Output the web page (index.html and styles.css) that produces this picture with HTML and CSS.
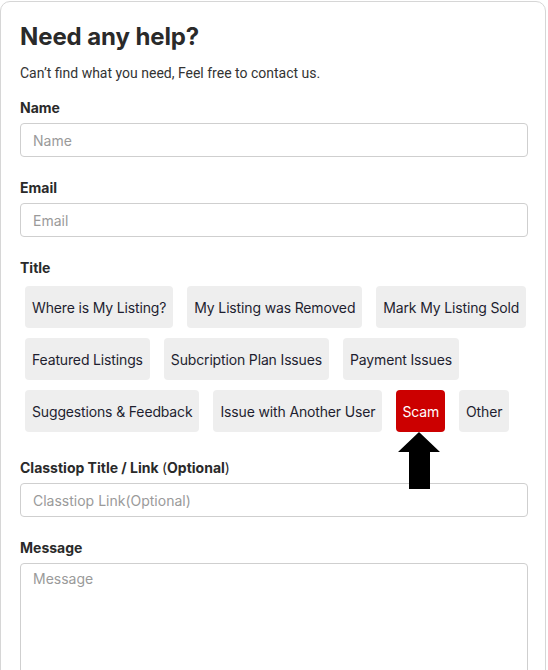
FILE: index.html
```html
<!DOCTYPE html>
<html>
<head>
<meta charset="utf-8">
<link rel="stylesheet" href="styles.css">
</head>
<body>
<div class="card">
  <h1 class="title">Need any help?</h1>
  <p class="sub">Can’t find what you need, Feel free to contact us.</p>

  <div class="field field-first">
    <label class="label">Name</label>
    <div class="input">Name</div>
  </div>

  <div class="field">
    <label class="label">Email</label>
    <div class="input">Email</div>
  </div>

  <div class="field field-chips">
    <label class="label">Title</label>
    <div class="chips">
      <span class="chip">Where is My Listing?</span>
      <span class="chip">My Listing was Removed</span>
      <span class="chip">Mark My Listing Sold</span>
      <span class="chip">Featured Listings</span>
      <span class="chip">Subcription Plan Issues</span>
      <span class="chip">Payment Issues</span>
      <span class="chip">Suggestions &amp; Feedback</span>
      <span class="chip">Issue with Another User</span>
      <span class="chip chip-active">Scam
        <svg class="arrow" width="42" height="57" viewBox="0 0 42 57"><polygon points="21,0 42,20 32,20 32,57 11,57 11,20 0,20" fill="#000"/></svg>
      </span>
      <span class="chip">Other</span>
    </div>
  </div>

  <div class="field field-after-chips">
    <label class="label">Classtiop Title / Link <span class="paren">(</span>Optional<span class="paren">)</span></label>
    <div class="input">Classtiop Link<span class="paren">(</span>Optional<span class="paren">)</span></div>
  </div>

  <div class="field">
    <label class="label">Message</label>
    <div class="input textarea">Message</div>
  </div>
</div>
</body>
</html>
```

FILE: styles.css
```css
html, body {
  margin: 0;
  padding: 0;
  background: #fff;
  overflow: hidden;
}
body {
  padding-top: 1px;
}
.card {
  width: 546px;
  height: 700px;
  box-sizing: border-box;
  border: 1px solid #d6d6d6;
  border-radius: 10px;
  padding: 19px 17px 0 19px;
  font-family: "Inter", "Liberation Sans", sans-serif;
  color: #2b2b2b;
}
.title {
  font-family: "Inter", sans-serif;
  font-weight: 700;
  font-size: 24px;
  line-height: 32px;
  margin: 0;
  color: #2a2a2a;
  letter-spacing: -0.1px;
}
.sub {
  font-family: "Roboto", sans-serif;
  font-size: 14px;
  line-height: 20px;
  margin: 10px 0 0;
  color: #333;
}
.field {
  display: flex;
  flex-direction: column;
  margin-top: 21px;
}
.field-first {
  margin-top: 15px;
}
.field-after-chips {
  margin-top: 26px;
}
.label {
  font-family: "Inter", sans-serif;
  font-weight: 700;
  font-size: 14px;
  line-height: 20px;
  color: #2a2a2a;
  margin-bottom: 5px;
}
.paren {
  font-weight: 400;
}
.input {
  box-sizing: border-box;
  height: 34px;
  border: 1px solid #cfcfcf;
  border-radius: 4px;
  padding: 0 12px;
  display: flex;
  align-items: center;
  font-family: "Inter", sans-serif;
  font-size: 14px;
  color: #9a9a9a;
}
.textarea {
  height: 140px;
  align-items: flex-start;
  padding-top: 6px;
}
.field-chips .label {
  margin-bottom: 8px;
}
.chips {
  display: flex;
  flex-wrap: wrap;
  gap: 10px 14px;
  padding-left: 5px;
}
.chip {
  position: relative;
  height: 42px;
  display: inline-flex;
  align-items: center;
  padding: 0 7px;
  background: #eeeeee;
  border-radius: 4px;
  font-family: "Inter", sans-serif;
  font-size: 14px;
  color: #1e1e30;
  letter-spacing: -0.15px;
}
.chip-active {
  background: #cc0000;
  color: #fff;
  padding: 0 6px;
}
.arrow {
  position: absolute;
  top: 100%;
  left: 2px;
}
```
